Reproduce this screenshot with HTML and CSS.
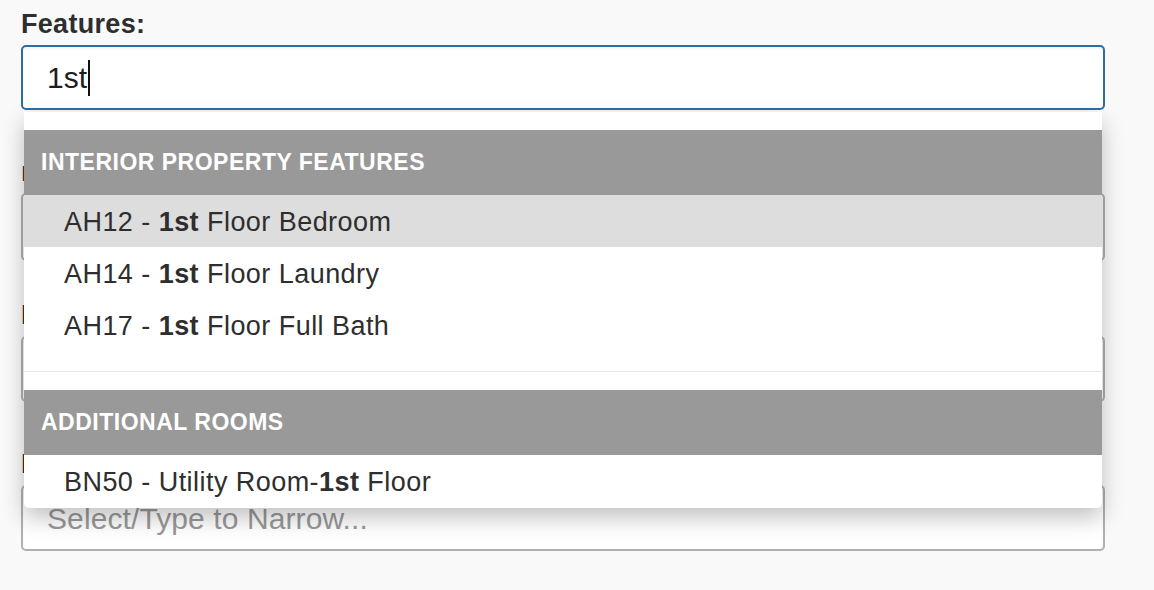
FILE: index.html
```html
<!DOCTYPE html>
<html lang="en">
<head>
<meta charset="utf-8">
<title>Features</title>
<link rel="stylesheet" href="styles.css">
</head>
<body>
<div class="form">
  <div class="group">
    <label class="label">Features:</label>
    <div class="field field-active"><span class="typed">1st</span><span class="caret"></span></div>
    <div class="menu">
      <div class="menu-section">
        <div class="menu-header">Interior Property Features</div>
        <div class="menu-item is-active">AH12 - <b>1st</b> Floor Bedroom</div>
        <div class="menu-item">AH14 - <b>1st</b> Floor Laundry</div>
        <div class="menu-item">AH17 - <b>1st</b> Floor Full Bath</div>
      </div>
      <div class="menu-section menu-section-last">
        <div class="menu-header">Additional Rooms</div>
        <div class="menu-item">BN50 - Utility Room-<b>1st</b> Floor</div>
      </div>
    </div>
  </div>
  <div class="group">
    <label class="label">&#305; of Stories:</label>
    <div class="field field-select"></div>
  </div>
  <div class="group group-close">
    <label class="label">Basement:</label>
    <div class="field"></div>
  </div>
  <div class="group">
    <label class="label">Parking:</label>
    <div class="field"><span class="placeholder">Select/Type to Narrow...</span></div>
  </div>
</div>
</body>
</html>
```
FILE: styles.css
```css
html, body {
  margin: 0;
  padding: 0;
  background: #f9f9f9;
}
body {
  font-family: "Liberation Sans", Arial, Helvetica, sans-serif;
  color: #333;
}
.form {
  padding: 9px 49px 0 21px;
  display: flex;
  flex-direction: column;
}
.group {
  position: relative;
  display: flex;
  flex-direction: column;
}
.group + .group {
  margin-top: 47px;
}
.group + .group-close {
  margin-top: 39px;
}
.label {
  display: block;
  font-size: 27px;
  font-weight: bold;
  line-height: 30px;
  letter-spacing: 0.3px;
  margin-bottom: 6px;
  color: #2e2e2e;
  white-space: nowrap;
}
.field {
  box-sizing: border-box;
  height: 66px;
  border: 2px solid #b0b0b0;
  border-radius: 5px;
  background: #fff;
  box-shadow: inset 0 2px 3px rgba(0, 0, 0, 0.05);
  display: flex;
  align-items: center;
  padding-left: 24px;
  font-size: 30px;
}
.field-active {
  height: 65px;
  border-color: #2d6e9d;
}
.field-select {
  height: 68px;
}
.typed {
  color: #1e1e1e;
}
.caret {
  display: inline-block;
  width: 1.5px;
  height: 36px;
  background: #111;
  margin-left: 1px;
}
.placeholder {
  color: #999;
  letter-spacing: 0.1px;
  padding-top: 2px;
}
.menu {
  position: absolute;
  left: 3px;
  right: 3px;
  top: 103px;
  background: #fff;
  border-radius: 0 0 5px 5px;
  box-shadow: 0 10px 22px rgba(0, 0, 0, 0.24);
  z-index: 10;
  overflow: hidden;
}
.menu-section {
  padding: 18px 0 20px;
  border-bottom: 1px solid #e6e6e6;
}
.menu-section-last {
  padding-bottom: 1px;
  border-bottom: 0;
}
.menu-header {
  height: 65px;
  display: flex;
  align-items: center;
  padding-left: 17px;
  background: #999;
  color: #fff;
  font-size: 23px;
  font-weight: bold;
  letter-spacing: 0.5px;
  text-transform: uppercase;
}
.menu-item {
  height: 52px;
  display: flex;
  align-items: center;
  padding-left: 40px;
  padding-top: 2px;
  box-sizing: border-box;
  font-size: 27px;
  letter-spacing: 0.45px;
  color: #2e2e2e;
  white-space: pre;
}
.menu-item b {
  font-weight: bold;
  color: #2e2e2e;
}
.menu-item.is-active {
  background: #ddd;
}
```
